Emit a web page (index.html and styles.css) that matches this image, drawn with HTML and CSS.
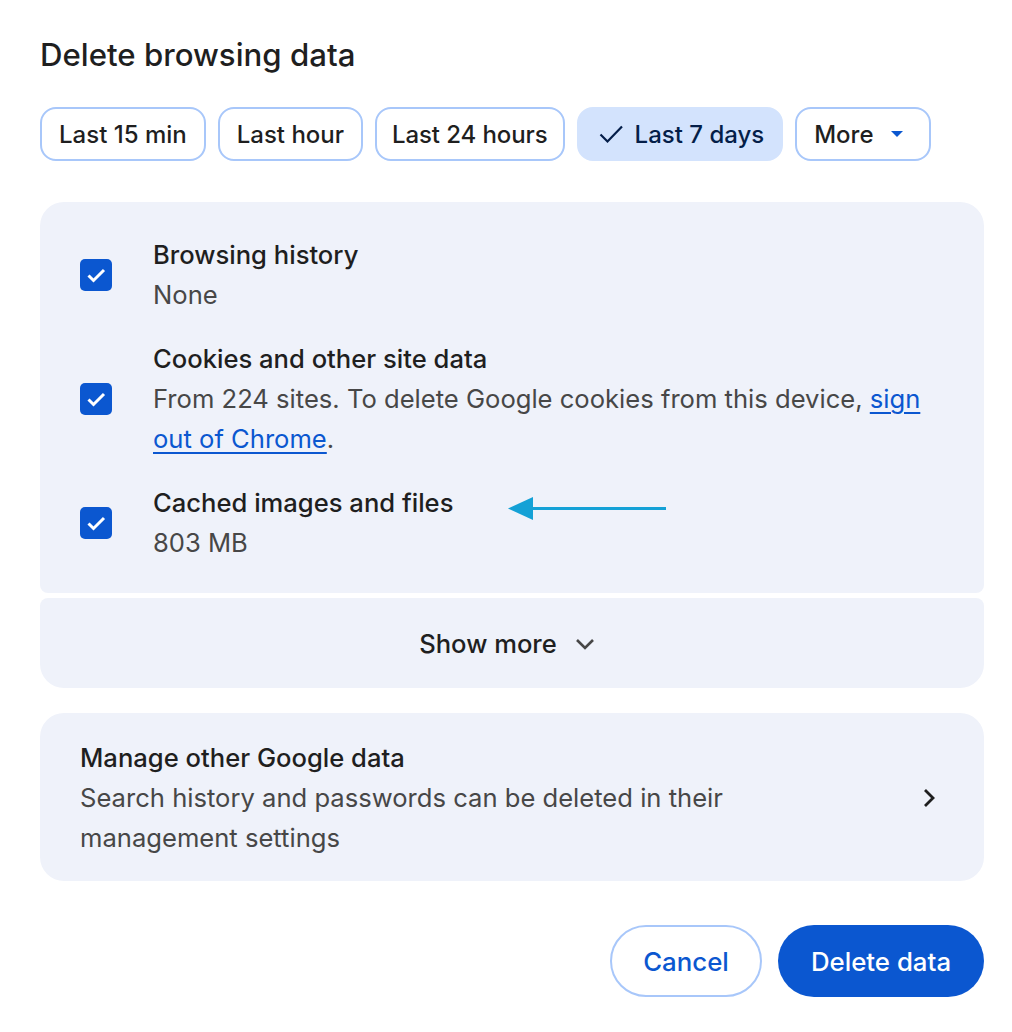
FILE: index.html
```html
<!DOCTYPE html>
<html lang="en">
<head>
<meta charset="utf-8">
<title>Delete browsing data</title>
<link rel="stylesheet" href="styles.css">
</head>
<body>
<div class="dialog">
  <h1 class="title">Delete browsing data</h1>

  <div class="chips">
    <button class="chip">Last 15 min</button>
    <button class="chip">Last hour</button>
    <button class="chip chip-narrow">Last 24 hours</button>
    <button class="chip chip-selected">
      <svg class="chip-check" viewBox="0 0 24 20" width="24" height="20"><path d="M1.5 10.5l7 7L23 2.5" fill="none" stroke="currentColor" stroke-width="2.2"/></svg>
      Last 7 days
    </button>
    <button class="chip chip-more">More
      <svg class="caret" viewBox="0 0 12 6" width="12" height="6"><path d="M0 0h12L6 6z" fill="currentColor"/></svg>
    </button>
  </div>

  <div class="panel panel-items">
    <div class="item">
      <span class="checkbox"><svg viewBox="0 0 32 32" width="32" height="32"><path d="M8.5 16.5l5 5L24 11" fill="none" stroke="#fff" stroke-width="3"/></svg></span>
      <div class="item-text">
        <div class="item-title">Browsing history</div>
        <div class="item-desc">None</div>
      </div>
    </div>
    <div class="item">
      <span class="checkbox"><svg viewBox="0 0 32 32" width="32" height="32"><path d="M8.5 16.5l5 5L24 11" fill="none" stroke="#fff" stroke-width="3"/></svg></span>
      <div class="item-text">
        <div class="item-title">Cookies and other site data</div>
        <div class="item-desc">From 224 sites. To delete Google cookies from this device, <a href="#" class="link">sign out of Chrome</a>.</div>
      </div>
    </div>
    <div class="item item-annotated">
      <span class="checkbox"><svg viewBox="0 0 32 32" width="32" height="32"><path d="M8.5 16.5l5 5L24 11" fill="none" stroke="#fff" stroke-width="3"/></svg></span>
      <div class="item-text">
        <div class="item-title">Cached images and files</div>
        <div class="item-desc">803 MB</div>
      </div>
      <svg class="annotation-arrow" viewBox="0 0 160 24" width="160" height="24">
        <path d="M20 11h138v3H20z" fill="#14a1d6"/>
        <path d="M0 12.5L25 1v23z" fill="#14a1d6"/>
      </svg>
    </div>
  </div>

  <div class="panel panel-more">
    <span class="show-more">Show more</span>
    <svg class="chev-down" viewBox="0 0 20 14" width="20" height="14"><path d="M2 3l8 8 8-8" fill="none" stroke="#474747" stroke-width="2.6"/></svg>
  </div>

  <div class="panel panel-manage">
    <div class="manage-text">
      <div class="item-title">Manage other Google data</div>
      <div class="item-desc">Search history and passwords can be deleted in their management settings</div>
    </div>
    <svg class="chev-right" viewBox="0 0 14 20" width="14" height="20"><path d="M3 2l8 8-8 8" fill="none" stroke="#1f1f1f" stroke-width="2.8"/></svg>
  </div>

  <div class="actions">
    <button class="btn btn-outline">Cancel</button>
    <button class="btn btn-filled">Delete data</button>
  </div>
</div>
</body>
</html>
```

FILE: styles.css
```css
* { box-sizing: border-box; }

html, body {
  margin: 0;
  padding: 0;
  background: #ffffff;
}

body {
  font-family: Inter, "Noto Sans", "Liberation Sans", sans-serif;
  color: #1f1f1f;
}

.dialog {
  padding: 35px 28px 34px 40px;
}

.title {
  margin: 0;
  font-size: 31.2px;
  line-height: 40px;
  font-weight: 500;
  color: #1f1f1f;
}

.chips {
  display: flex;
  gap: 12px;
  margin-top: 32px;
}

.chip {
  display: flex;
  align-items: center;
  height: 54px;
  padding: 0 17px;
  border: 2px solid #a8c7fa;
  border-radius: 16px;
  background: #ffffff;
  font-family: inherit;
  font-size: 24px;
  font-weight: 500;
  color: #1f1f1f;
}

.chip-narrow {
  padding: 0 15px;
  letter-spacing: -0.1px;
}

.chip-selected {
  background: #d3e3fd;
  border-color: #d3e3fd;
  color: #041e49;
  padding-left: 20px;
  padding-right: 17px;
}

.chip-check {
  margin-right: 12px;
}

.chip-more {
  padding-right: 26px;
}

.caret {
  margin-left: 17px;
  color: #0b57d0;
}

.panel {
  background: #eff2fa;
}

.panel-items {
  margin-top: 41px;
  border-radius: 24px 24px 8px 8px;
  padding: 33px 40px 30px 40px;
  display: flex;
  flex-direction: column;
  gap: 24px;
}

.item {
  display: flex;
  align-items: center;
  position: relative;
}

.checkbox {
  flex: none;
  width: 32px;
  height: 32px;
  border-radius: 5px;
  background: #0b57d0;
  display: flex;
  margin-right: 41px;
}

.item-title {
  font-size: 25.6px;
  line-height: 40px;
  font-weight: 500;
  color: #1f1f1f;
}

.item-desc {
  font-size: 25.6px;
  line-height: 40px;
  color: #474747;
}

.link {
  color: #0b57d0;
  text-decoration: underline;
  text-underline-offset: 4px;
}

.annotation-arrow {
  position: absolute;
  left: 428px;
  top: 13px;
  width: 160px;
  height: 24px;
}

.panel-more {
  margin-top: 5px;
  height: 90px;
  border-radius: 8px 8px 24px 24px;
  display: flex;
  align-items: center;
  justify-content: center;
  gap: 18px;
  padding-right: 10px;
}

.show-more {
  font-size: 25.6px;
  font-weight: 500;
  color: #1f1f1f;
}

.chev-down {
  margin-top: 2px;
}

.panel-manage {
  margin-top: 25px;
  border-radius: 24px;
  padding: 25px 48px 23px 40px;
  display: flex;
  align-items: center;
  justify-content: space-between;
}

.manage-text {
  max-width: 720px;
}

.actions {
  display: flex;
  justify-content: flex-end;
  gap: 16px;
  margin-top: 44px;
}

.btn {
  height: 72px;
  border-radius: 36px;
  font-family: inherit;
  font-size: 25.8px;
  font-weight: 500;
  padding: 0;
}

.btn-outline {
  background: #ffffff;
  border: 2px solid #a8c7fa;
  color: #0b57d0;
  width: 152px;
}

.btn-filled {
  background: #0b57d0;
  border: none;
  color: #ffffff;
  width: 206px;
}
```
